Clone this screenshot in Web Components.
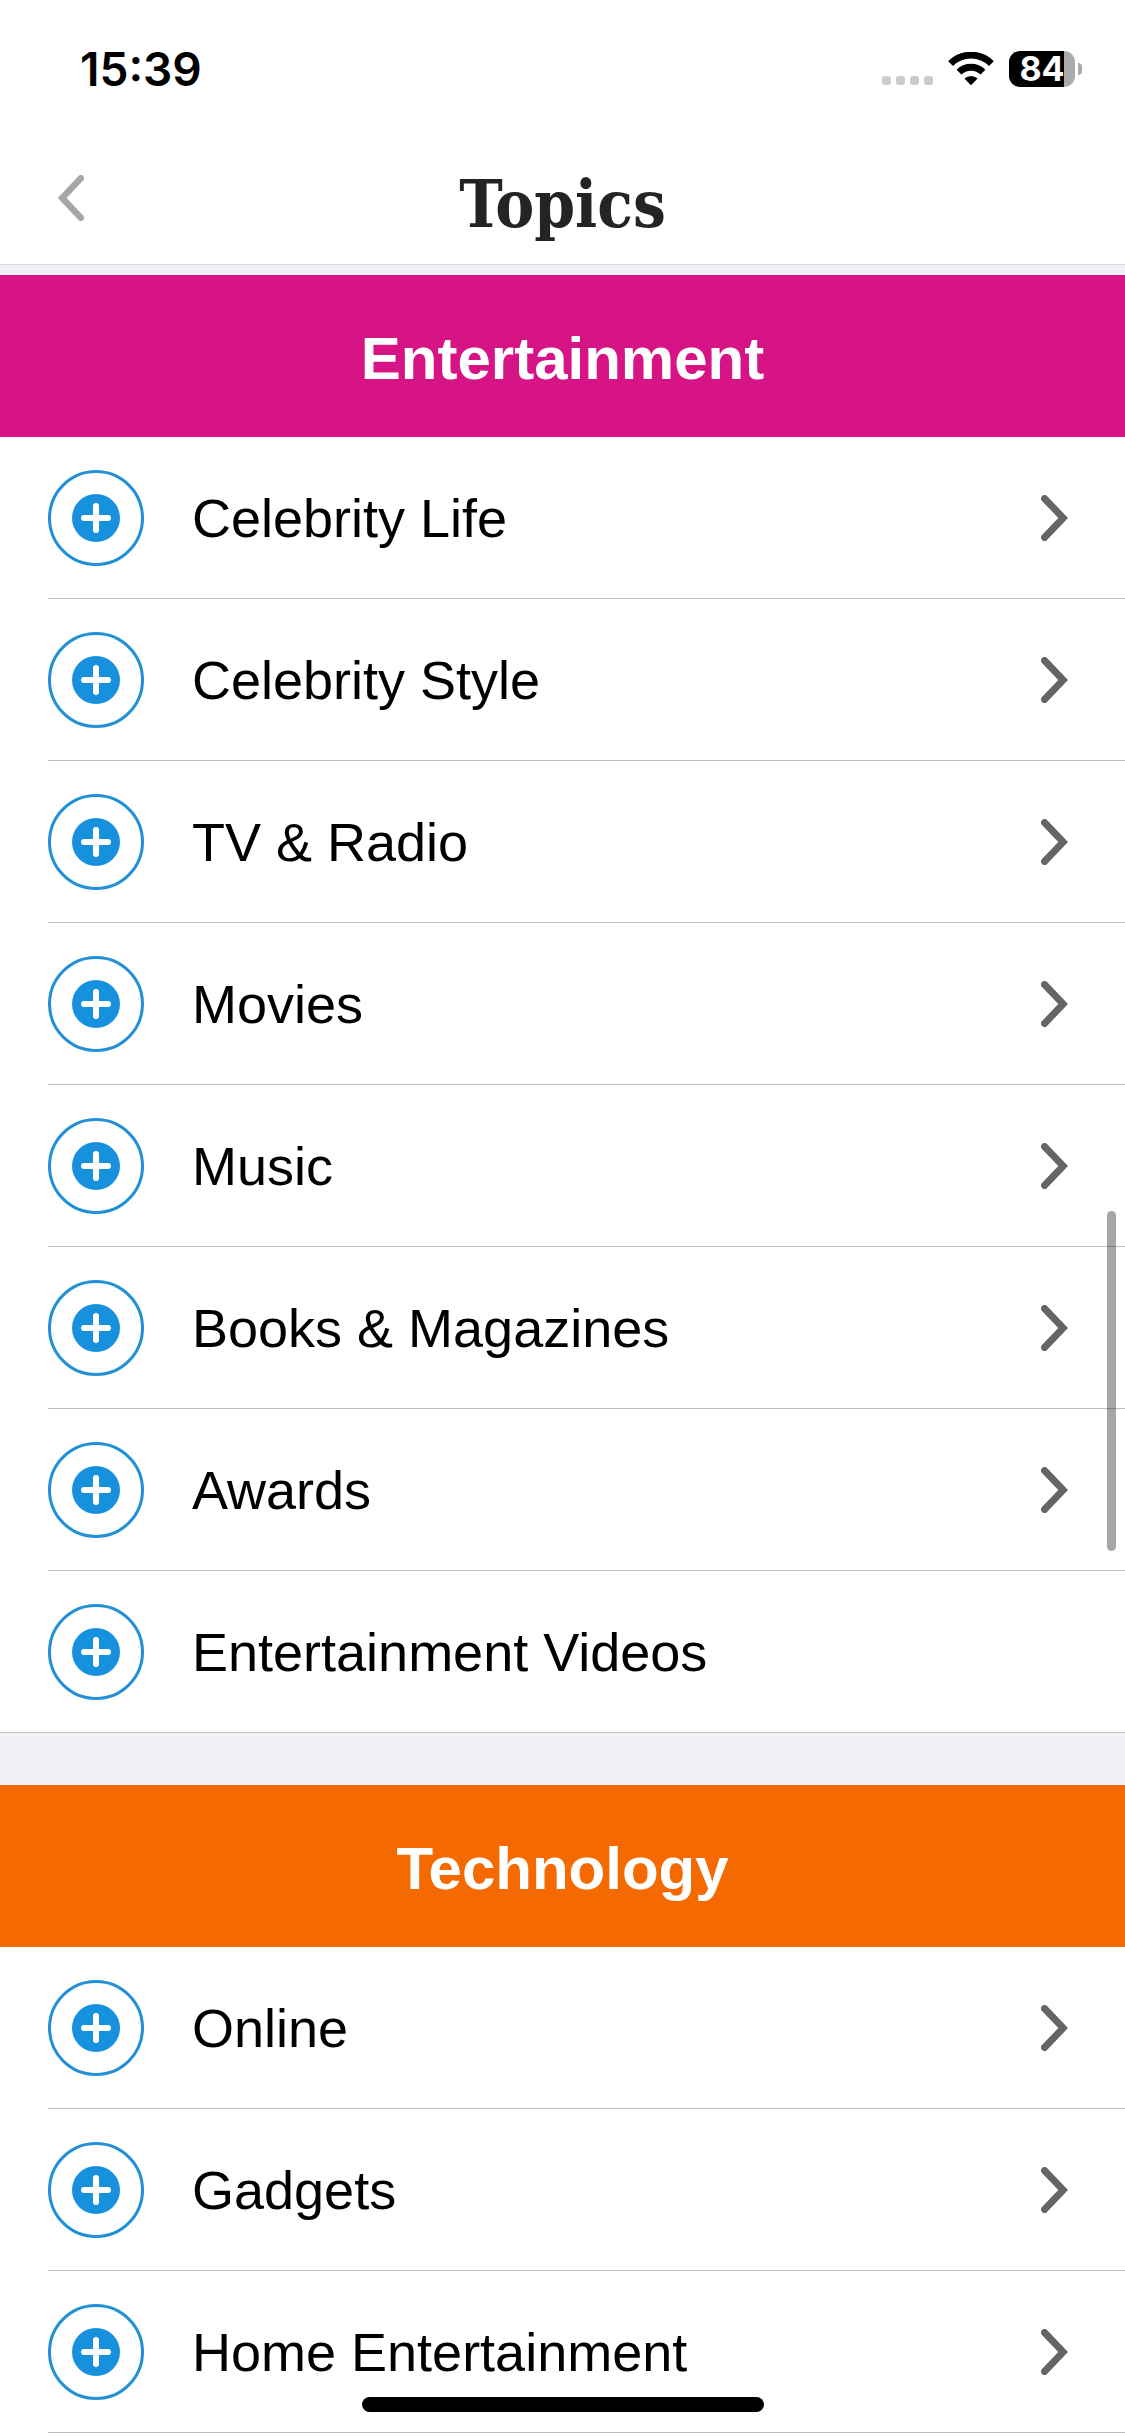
<!DOCTYPE html>
<html lang="en">
<head>
<meta charset="utf-8">
<meta name="viewport" content="width=device-width, initial-scale=1">
<title>Topics</title>
<style>
  html, body { margin: 0; height: 100%; overflow: hidden; background: #fff; }
  body { font-family: "Liberation Sans", Arial, sans-serif; color: #000; }
</style>
</head>
<body>
<topics-app>
  <status-bar slot="status" time="15:39" battery="84"></status-bar>
  <nav-header slot="header">Topics</nav-header>
  <topic-section heading="Entertainment" style="--accent:#d71485">
    <topic-row more>Celebrity Life</topic-row>
    <topic-row more>Celebrity Style</topic-row>
    <topic-row more>TV &amp; Radio</topic-row>
    <topic-row more>Movies</topic-row>
    <topic-row more>Music</topic-row>
    <topic-row more>Books &amp; Magazines</topic-row>
    <topic-row more>Awards</topic-row>
    <topic-row>Entertainment Videos</topic-row>
  </topic-section>
  <topic-section heading="Technology" style="--accent:#f56a00">
    <topic-row more>Online</topic-row>
    <topic-row more>Gadgets</topic-row>
    <topic-row more>Home Entertainment</topic-row>
  </topic-section>
</topics-app>

<template id="t-app">
  <style>
    :host { display: flex; flex-direction: column; height: 100vh; overflow: hidden; position: relative; }
    main { flex: 1; min-height: 0; overflow: hidden; position: relative; background: #fff; }
    .list { display: flex; flex-direction: column; gap: 52px; padding-top: 10px; background: #f0f0f5; }
    .thumb { position: absolute; right: 9px; top: 946px; width: 9px; height: 340px; border-radius: 5px; background: rgba(0,0,0,.35); }
    .home { position: absolute; bottom: 24px; left: 50%; width: 402px; height: 15px; margin-left: -201px; border-radius: 8px; background: #000; }
  </style>
  <slot name="status"></slot>
  <slot name="header"></slot>
  <main>
    <div class="list"><slot></slot></div>
    <div class="thumb"></div>
  </main>
  <div class="home"></div>
</template>

<template id="t-status">
  <style>
    :host { display: flex; box-sizing: border-box; height: 132px; padding: 6px 43px 0 80px; align-items: center; justify-content: space-between; font-family: Inter, sans-serif; }
    .time { font-size: 46px; line-height: 54px; font-weight: 600; }
    .icons { display: flex; align-items: center; }
    .dots { width: 52px; height: 34px; margin-right: 14px; }
    .wifi { width: 46px; height: 34px; margin-right: 15px; }
    .battery { display: flex; align-items: center; justify-content: center; box-sizing: border-box; width: 66px; height: 36px; border-radius: 11px; background: linear-gradient(to right, #000 55px, #aaa 55px); color: #fff; font-size: 34px; line-height: 36px; font-weight: 700; }
    .nub { width: 4px; height: 12px; margin-left: 3px; border-radius: 0 6px 6px 0; background: #aaa; }
  </style>
  <span class="time"></span>
  <div class="icons">
    <svg class="dots" viewBox="0 0 52 34" fill="#cbcbcb" aria-hidden="true">
      <rect x="0" y="24" width="9" height="9" rx="3"/><rect x="14" y="24" width="9" height="9" rx="3"/>
      <rect x="28" y="24" width="9" height="9" rx="3"/><rect x="42" y="24" width="9" height="9" rx="3"/>
    </svg>
    <svg class="wifi" viewBox="0 0 46 34" aria-hidden="true">
      <path d="M2.6 11.6A28.6 28.6 0 0 1 43.4 11.6" fill="none" stroke="#000" stroke-width="6.8"/>
      <path d="M11 20.2A17 17 0 0 1 35 20.2" fill="none" stroke="#000" stroke-width="6.8"/>
      <path d="M16.4 26.6A9.6 9.6 0 0 1 29.6 26.6L23.8 32.6Q23 33.4 22.2 32.6Z"/>
    </svg>
    <div class="battery"></div><div class="nub"></div>
  </div>
</template>

<template id="t-header">
  <style>
    :host { display: grid; grid-template-columns: 1fr auto 1fr; align-items: center; height: 132px; padding: 0 48px; border-bottom: 1px solid #dcdcdf; }
    button { justify-self: start; display: flex; padding: 10px; border: 0; background: none; }
    svg { width: 26px; height: 46px; }
    h1 { margin: 0; padding-top: 12px; font: 700 65px/76px "DejaVu Serif Condensed", "DejaVu Serif", serif; color: #222425; }
  </style>
  <button type="button" aria-label="Back">
    <svg viewBox="0 0 26 46" fill="none" stroke="#a6a6a6" stroke-width="6.4" stroke-linecap="round" stroke-linejoin="miter" aria-hidden="true"><path d="M22.8 3.2L4.2 23L22.8 42.8"/></svg>
  </button>
  <h1><slot></slot></h1>
</template>

<template id="t-section">
  <style>
    :host { display: block; background: #fff; }
    h2 { display: flex; align-items: center; justify-content: center; box-sizing: border-box; height: 162px; margin: 0; padding-top: 6px; background: var(--accent); color: #fff; font-size: 60px; line-height: 70px; font-weight: 700; }
  </style>
  <h2></h2>
  <div role="list"><slot></slot></div>
</template>

<template id="t-row">
  <style>
    :host { display: flex; box-sizing: border-box; height: 162px; padding-left: 48px; align-items: center; gap: 48px;
      background: linear-gradient(#c0c0c3, #c0c0c3) right bottom / calc(100% - var(--line, 48px)) 1px no-repeat; }
    button { flex: none; display: flex; width: 96px; height: 96px; padding: 0; border: 0; border-radius: 50%; background: none; }
    .plus { width: 96px; height: 96px; }
    a { flex: 1; display: flex; align-items: center; justify-content: space-between; align-self: stretch; padding-right: 57px; color: #000; text-decoration: none; font-size: 54px; line-height: 64px; }
    .chev { width: 27px; height: 46px; display: none; }
    :host([more]) .chev { display: block; }
  </style>
  <button type="button" aria-label="Follow topic">
    <svg class="plus" viewBox="0 0 96 96" aria-hidden="true">
      <circle cx="48" cy="48" r="46.5" fill="#fff" stroke="#2190d6" stroke-width="3"/>
      <circle cx="48" cy="48" r="24" fill="#1791de"/>
      <path d="M36 48H60M48 36V60" stroke="#fff" stroke-width="6" stroke-linecap="round"/>
    </svg>
  </button>
  <a href="#"><span><slot></slot></span>
    <svg class="chev" viewBox="0 0 27 46" fill="none" stroke="#636566" stroke-width="7" stroke-linecap="round" aria-hidden="true"><path d="M3.5 3.5L22.2 23L3.5 42.5"/></svg>
  </a>
</template>

<script>
  class Base extends HTMLElement {
    constructor() {
      super();
      this.attachShadow({ mode: "open" })
        .append(document.getElementById(this.constructor.template).content.cloneNode(true));
    }
    $(selector) { return this.shadowRoot.querySelector(selector); }
  }
  class TopicsApp extends Base { static template = "t-app"; }
  class StatusBar extends Base {
    static template = "t-status";
    connectedCallback() {
      this.$(".time").textContent = this.getAttribute("time");
      this.$(".battery").textContent = this.getAttribute("battery");
    }
  }
  class NavHeader extends Base { static template = "t-header"; }
  class TopicSection extends Base {
    static template = "t-section";
    connectedCallback() {
      this.$("h2").textContent = this.getAttribute("heading");
      // A finished section closes with a full-width rule.
      const last = this.lastElementChild;
      if (last && !last.hasAttribute("more")) last.style.setProperty("--line", "0px");
    }
  }
  class TopicRow extends Base {
    static template = "t-row";
    connectedCallback() { this.setAttribute("role", "listitem"); }
  }
  customElements.define("topics-app", TopicsApp);
  customElements.define("status-bar", StatusBar);
  customElements.define("nav-header", NavHeader);
  customElements.define("topic-section", TopicSection);
  customElements.define("topic-row", TopicRow);
</script>
</body>
</html>
